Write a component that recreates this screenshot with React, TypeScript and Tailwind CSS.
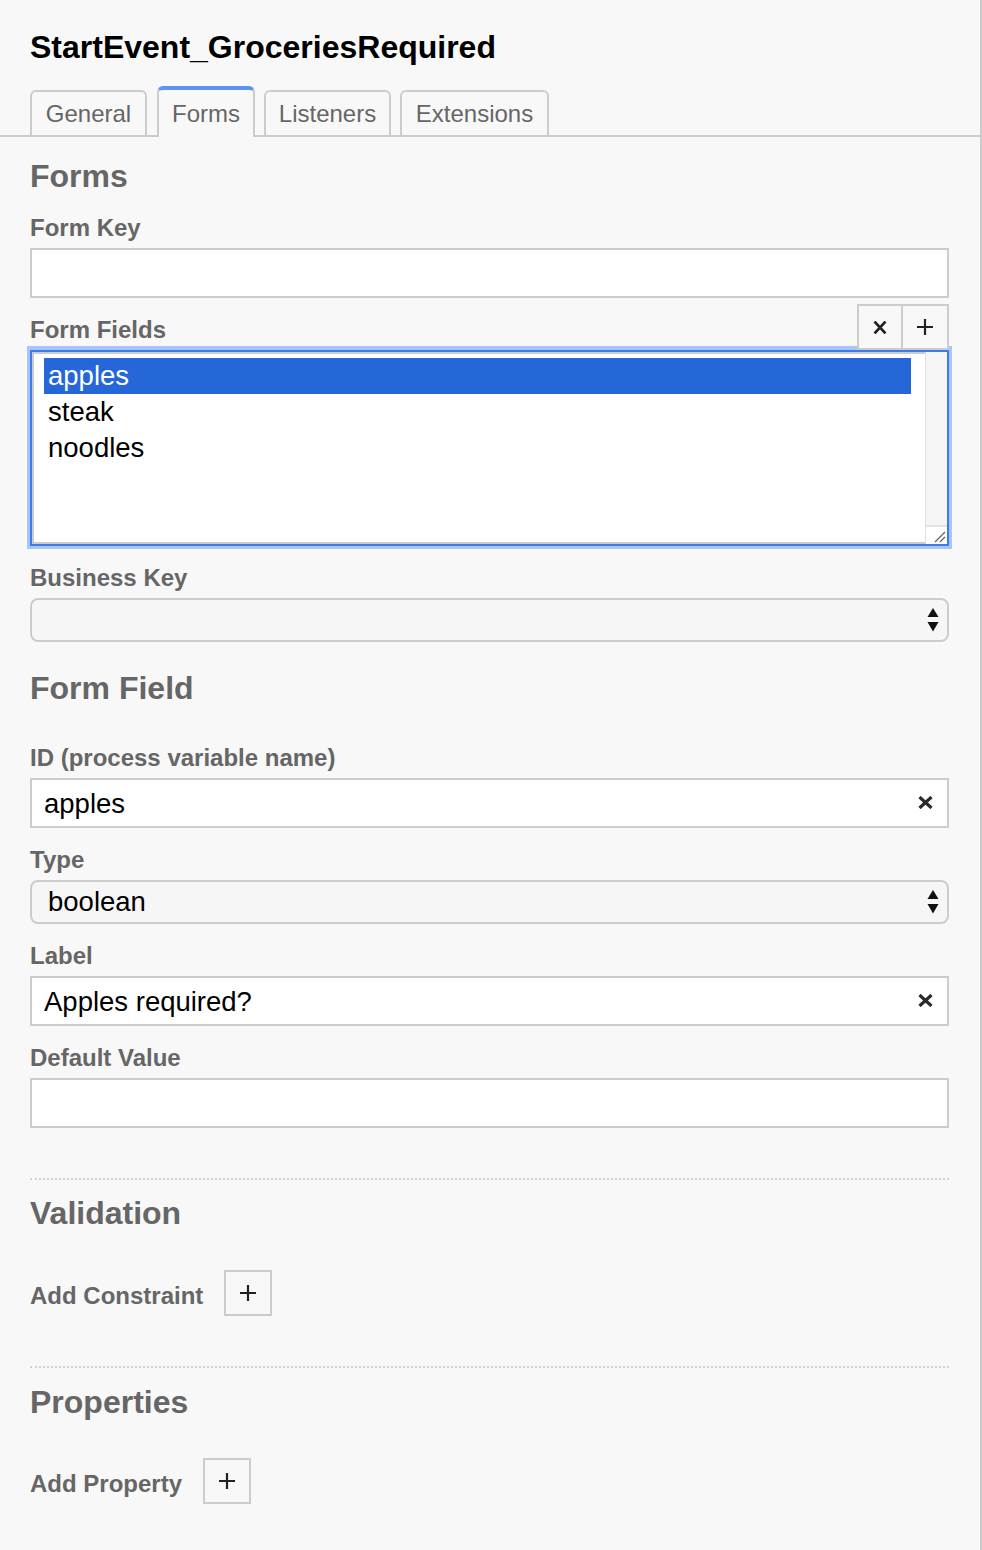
import React from "react";

const tabs = [
  { label: "General", w: "w-[117px]", ml: "" },
  { label: "Forms", w: "w-[98px]", ml: "ml-[10px]" },
  { label: "Listeners", w: "w-[127px]", ml: "ml-[9px]" },
  { label: "Extensions", w: "w-[149px]", ml: "ml-[9px]" },
];
const fields = ["apples", "steak", "noodles"];

function Heading({ children, className = "" }: { children: React.ReactNode; className?: string }) {
  return (
    <h2 className={"text-[32px] leading-[32px] font-bold text-[#666] " + className}>
      {children}
    </h2>
  );
}

function Label({ children, className = "" }: { children: React.ReactNode; className?: string }) {
  return (
    <div className={"text-[24px] leading-[24px] font-bold text-[#666] " + className}>
      {children}
    </div>
  );
}

function ClearIcon() {
  return (
    <svg width="15" height="13" viewBox="0 0 15 13" className="shrink-0 mt-[-2px]">
      <path d="M1.5 1 L13.5 12 M13.5 1 L1.5 12" stroke="#2a2a2a" strokeWidth="3.2" fill="none" />
    </svg>
  );
}

function PlusIcon() {
  return (
    <svg width="16" height="16" viewBox="0 0 16 16">
      <path d="M8 0 V16 M0 8 H16" stroke="#222" strokeWidth="2.2" fill="none" />
    </svg>
  );
}

function TextInput({ value, clearable, className = "" }: { value?: string; clearable?: boolean; className?: string }) {
  return (
    <div
      className={
        "h-[50px] bg-white border-2 border-[#ccc] flex items-center pl-[12px] pr-[14px] text-[27.5px] text-black " +
        className
      }
    >
      <span className="flex-1 pt-[2px]">{value}</span>
      {clearable && <ClearIcon />}
    </div>
  );
}

function SelectBox({ value, className = "" }: { value?: string; className?: string }) {
  return (
    <div
      className={
        "h-[44px] rounded-[8px] border-2 border-[#ccc] bg-[#f6f6f6] flex items-center pl-[16px] pr-[8px] text-[27.5px] text-black " +
        className
      }
    >
      <span className="flex-1">{value}</span>
      <svg width="12" height="24" viewBox="0 0 12 24" className="shrink-0">
        <polygon points="0.5,9 6,0 11.5,9" fill="#111" />
        <polygon points="0.5,14 11.5,14 6,23.5" fill="#111" />
      </svg>
    </div>
  );
}

function AddRow({ label, className = "" }: { label: string; className?: string }) {
  return (
    <div className={"flex items-start " + className}>
      <Label className="mt-[14px]">{label}</Label>
      <button className="ml-[21px] w-[48px] h-[46px] border-2 border-[#ccc] flex items-center justify-center">
        <PlusIcon />
      </button>
    </div>
  );
}

export default function App() {
  return (
    <div className="w-[982px] h-[1550px] bg-[#f8f8f8] border-r-2 border-[#ccc] font-['Liberation_Sans',Arial,sans-serif] overflow-hidden">
      <h1 className="pt-[31px] pl-[30px] text-[32px] leading-[32px] font-bold text-black">
        StartEvent_GroceriesRequired
      </h1>

      <div className="mt-[23px] flex items-end pl-[30px] border-b-2 border-[#ccc]">
        {tabs.map((t) =>
          t.label === "Forms" ? (
            <div
              key={t.label}
              className={
                "h-[51px] mb-[-2px] pt-[12px] text-center border-t-4 border-x-2 border-t-[#5b94f3] border-x-[#ccc] rounded-t-[6px] bg-[#f8f8f8] text-[24px] leading-[24px] text-[#666] " +
                t.w +
                " " +
                t.ml
              }
            >
              {t.label}
            </div>
          ) : (
            <div
              key={t.label}
              className={
                "h-[45px] pt-[10px] text-center border-2 border-b-0 border-[#ccc] rounded-t-[6px] text-[24px] leading-[24px] text-[#666] " +
                t.w +
                " " +
                t.ml
              }
            >
              {t.label}
            </div>
          ),
        )}
      </div>

      <div className="pl-[30px] pr-[31px]">
        <Heading className="mt-[23px]">Forms</Heading>

        <Label className="mt-[24px]">Form Key</Label>
        <TextInput className="mt-[8px]" />

        <div className="mt-[6px] h-[46px] flex items-start justify-between relative z-10">
          <Label className="mt-[14px]">Form Fields</Label>
          <div className="flex">
            <button className="w-[46px] h-[46px] border-2 border-[#ccc] bg-[#f8f8f8] flex items-center justify-center">
              <svg width="14" height="13" viewBox="0 0 14 13">
                <path d="M1.5 0.5 L12.5 12.5 M12.5 0.5 L1.5 12.5" stroke="#222" strokeWidth="2.6" fill="none" />
              </svg>
            </button>
            <button className="w-[46px] h-[46px] border-2 border-l-0 border-[#ccc] bg-[#f8f8f8] flex items-center justify-center">
              <PlusIcon />
            </button>
          </div>
        </div>

        <div className="mt-[-4px] ml-[-3px] mr-[-3px] h-[203px] pt-[4px] px-[3px] pb-[3px] bg-[#a7c5f7]">
          <div className="h-full border-2 border-[#3a7bf2] flex">
            <div className="flex-1 bg-white border-l-2 border-t-2 border-b-2 border-[#ccc] pt-[4px] pl-[10px] pr-[14px]">
              {fields.map((f, i) => (
                <div
                  key={f}
                  className={
                    "h-[36px] leading-[36px] pl-[4px] text-[27.5px] " +
                    (i === 0 ? "bg-[#2566d9] text-white" : "text-black")
                  }
                >
                  {f}
                </div>
              ))}
            </div>
            <div className="w-[22px] flex flex-col bg-[#f5f5f5] border-l border-[#e0e0e0]">
              <div className="flex-1" />
              <div className="h-[19px] bg-white border-t-2 border-[#e3e3e3] relative">
                <svg width="12" height="12" viewBox="0 0 12 12" className="absolute right-[1px] bottom-[1px]">
                  <path d="M1 11 L11 1 M6 11 L11 6" stroke="#666" strokeWidth="1.3" fill="none" />
                </svg>
              </div>
            </div>
          </div>
        </div>

        <Label className="mt-[17px]">Business Key</Label>
        <SelectBox className="mt-[8px]" />

        <Heading className="mt-[30px]">Form Field</Heading>

        <Label className="mt-[42px]">ID (process variable name)</Label>
        <TextInput className="mt-[8px]" value="apples" clearable />

        <Label className="mt-[20px]">Type</Label>
        <SelectBox className="mt-[8px]" value="boolean" />

        <Label className="mt-[20px]">Label</Label>
        <TextInput className="mt-[8px]" value="Apples required?" clearable />

        <Label className="mt-[20px]">Default Value</Label>
        <TextInput className="mt-[8px]" />

        <div className="mt-[50px] border-t-2 border-dotted border-[#d2d2d2]" />
        <Heading className="mt-[17px]">Validation</Heading>
        <AddRow className="mt-[41px]" label="Add Constraint" />

        <div className="mt-[50px] border-t-2 border-dotted border-[#d2d2d2]" />
        <Heading className="mt-[18px]">Properties</Heading>
        <AddRow className="mt-[40px]" label="Add Property" />
      </div>
    </div>
  );
}
